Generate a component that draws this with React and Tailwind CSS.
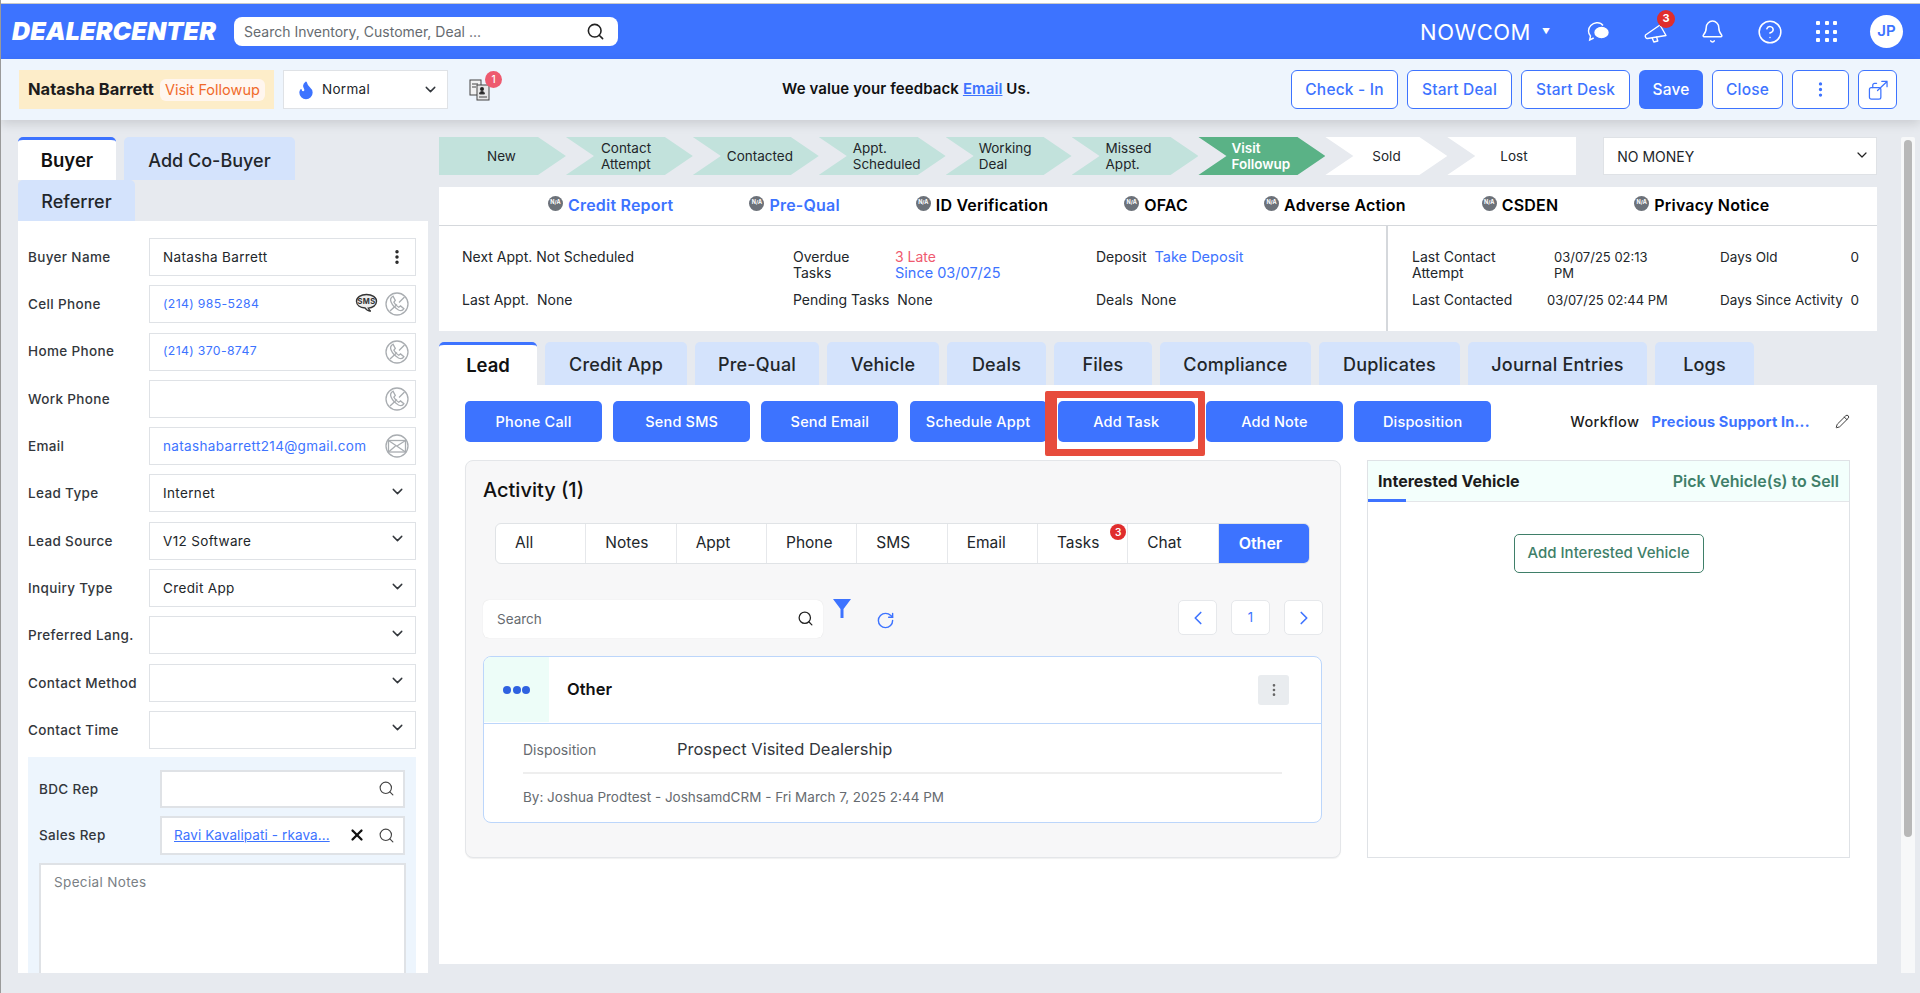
import React from 'react';
import { Search, ChevronDown, EllipsisVertical, Bell, CircleHelp, Flame, X, ChevronLeft, ChevronRight, RotateCw, Pencil } from 'lucide-react';

const steps = [
  { a: 'New', w: 'w-[127px]', pl: 'pl-[48px]', clip: '[clip-path:polygon(0_0,99px_0,100%_50%,99px_100%,0_100%)]', bg: 'bg-[#c2e2dc]' },
  { a: 'Contact', b: 'Attempt', w: 'w-[127px]', pl: 'pl-[35px]', clip: '[clip-path:polygon(0_0,99px_0,100%_50%,99px_100%,0_100%,28px_50%)]', bg: 'bg-[#c2e2dc]' },
  { a: 'Contacted', w: 'w-[126px]', pl: 'pl-[34px]', clip: '[clip-path:polygon(0_0,98px_0,100%_50%,98px_100%,0_100%,28px_50%)]', bg: 'bg-[#c2e2dc]' },
  { a: 'Appt.', b: 'Scheduled', w: 'w-[127px]', pl: 'pl-[34px]', clip: '[clip-path:polygon(0_0,99px_0,100%_50%,99px_100%,0_100%,28px_50%)]', bg: 'bg-[#c2e2dc]' },
  { a: 'Working', b: 'Deal', w: 'w-[126px]', pl: 'pl-[33px]', clip: '[clip-path:polygon(0_0,98px_0,100%_50%,98px_100%,0_100%,28px_50%)]', bg: 'bg-[#c2e2dc]' },
  { a: 'Missed', b: 'Appt.', w: 'w-[127px]', pl: 'pl-[34px]', clip: '[clip-path:polygon(0_0,99px_0,100%_50%,99px_100%,0_100%,28px_50%)]', bg: 'bg-[#c2e2dc]' },
  { a: 'Visit', b: 'Followup', w: 'w-[127px]', pl: 'pl-[33px]', clip: '[clip-path:polygon(0_0,99px_0,100%_50%,99px_100%,0_100%,28px_50%)]', bg: 'bg-[#5ab286] text-white font-semibold' },
  { a: 'Sold', w: 'w-[122px]', pl: 'pl-[47px]', clip: '[clip-path:polygon(0_0,94px_0,100%_50%,94px_100%,0_100%,28px_50%)]', bg: 'bg-white' },
  { a: 'Lost', w: 'w-[129px]', pl: 'pl-[53px]', clip: '[clip-path:polygon(0_0,100%_0,100%_100%,0_100%,28px_50%)]', bg: 'bg-white' },
];

const checks = [
  { label: 'Credit Report', cls: 'text-[#3d73ff]' },
  { label: 'Pre-Qual', cls: 'text-[#3d73ff]' },
  { label: 'ID Verification', cls: 'text-black' },
  { label: 'OFAC', cls: 'text-black' },
  { label: 'Adverse Action', cls: 'text-black' },
  { label: 'CSDEN', cls: 'text-black' },
  { label: 'Privacy Notice', cls: 'text-black' },
];

const tabs = [
  { label: 'Credit App', w: 'w-[142px]' },
  { label: 'Pre-Qual', w: 'w-[124px]' },
  { label: 'Vehicle', w: 'w-[112px]' },
  { label: 'Deals', w: 'w-[99px]' },
  { label: 'Files', w: 'w-[98px]' },
  { label: 'Compliance', w: 'w-[151px]' },
  { label: 'Duplicates', w: 'w-[141px]' },
  { label: 'Journal Entries', w: 'w-[179px]' },
  { label: 'Logs', w: 'w-[99px]' },
];

const filters = ['All', 'Notes', 'Appt', 'Phone', 'SMS', 'Email', 'Tasks', 'Chat'];

const PhoneCircle = () => (
  <svg width="24" height="24" viewBox="0 0 24 24" fill="none" stroke="#a9adb1" strokeWidth="1.3" className="shrink-0">
    <circle cx="12" cy="12" r="11" />
    <path d="M8 4.200c-2.300 1.300-3 3.300-1.900 5.900 1.400 3.400 4.200 6.200 7.400 7.900 2.400 1.200 4.300.6 5.400-1.300l-3.400-2.800-1.800 1.300c-1.900-1.100-3.800-3-4.800-5l1.400-1.700z" />
    <path d="M5 19l7-6.500M14 10.500L19.500 5" />
  </svg>
);

const MailCircle = () => (
  <svg width="24" height="24" viewBox="0 0 24 24" fill="none" stroke="#a9adb1" strokeWidth="1.3" className="shrink-0">
    <circle cx="12" cy="12" r="11" />
    <rect x="3.500" y="6.500" width="17" height="11.500" />
    <path d="M3.500 6.500l17 11.500M3.500 18l7-6M20.500 6.500L12 12" />
  </svg>
);

const SmsBubble = () => (
  <svg width="23" height="22" viewBox="0 0 23 22" className="shrink-0">
    <path d="M11.500 1.500c5.600 0 10 2.900 10 6.800s-4 6.600-8.200 6.800c.6 1.600 1.400 2.600 2.400 3.200-2.400-.2-4.400-1.400-5.600-3.300C5 14.700 1.500 12 1.500 8.300c0-3.900 4.400-6.800 10-6.800z" fill="#ededed" stroke="#333" strokeWidth="1.400" />
    <text x="11.500" y="11" textAnchor="middle" fontSize="7.500" fontWeight="700" fill="#333" fontFamily="Inter, sans-serif">SMS</text>
  </svg>
);

const NaDot = () => (
  <span className="flex h-[15px] w-[15px] shrink-0 -translate-y-[2px] items-center justify-center rounded-full bg-[#6c7179] text-[5.5px] font-bold leading-none text-white">N/A</span>
);

const Field = ({ label, children }) => (
  <div className="flex h-[38px] items-center">
    <div className="w-[121px] shrink-0 whitespace-nowrap text-[13.5px] font-medium tracking-[0.35px] text-[#33373c]">{label}</div>
    <div className="flex h-full w-[267px] items-center border border-[#dfe2e6] bg-white pl-[13px] pr-[6px] text-[13.5px] tracking-[0.35px] text-[#22262a]">{children}</div>
  </div>
);

const SelectField = ({ label, value }) => (
  <Field label={label}>
    <span className="flex-1">{value}</span>
    <ChevronDown size={17} strokeWidth={2} className="mr-[3px] -translate-y-[2px] text-[#33373c]" />
  </Field>
);

const ToolButton = ({ w, children }) => (
  <button className={`flex h-[39px] ${w} items-center justify-center rounded-[6px] border border-[#3d73ff] bg-white text-[15.5px] font-medium tracking-[0.2px] text-[#3d73ff]`}>{children}</button>
);

const ActionButton = ({ children }) => (
  <button className="flex h-[41px] w-[137px] items-center justify-center whitespace-nowrap rounded-[5px] bg-[#3d73ff] text-[14.5px] font-medium tracking-[0.2px] text-white">{children}</button>
);

const PageButton = ({ children }) => (
  <div className="flex h-[35px] w-[39px] items-center justify-center rounded-[5px] border border-[#e6e8eb] bg-white text-[13px] text-[#3d73ff]">{children}</div>
);

export default function App() {
  return (
    <div className="flex h-screen flex-col overflow-hidden border-l border-l-[#9a9a9a] bg-[#e7eaef] font-['Inter','Liberation_Sans',sans-serif] text-[#22262a]">
      <div className="h-[4px] shrink-0 border-b border-b-[#c9c9c9] bg-white"></div>

      {/* Top bar */}
      <header className="flex h-[55px] shrink-0 items-center bg-[#3d73ff] pr-[17px] text-white">
        <div className="ml-[11px] w-[222px] text-[25px] font-black italic leading-none tracking-[0.1px]">DEALERCENTER</div>
        <div className="flex h-[29px] w-[384px] items-center rounded-[8px] bg-white pl-[10px] pr-[13px]">
          <span className="flex-1 text-[14px] text-[#666b70]">Search Inventory, Customer, Deal ...</span>
          <Search size={19} strokeWidth={2} className="text-[#222]" />
        </div>
        <div className="ml-auto flex items-center">
          <span className="text-[22px] leading-none tracking-[0.5px]">NOWCOM</span>
          <span className="ml-[11px] -translate-y-[1px] text-[8px]">▼</span>
          <svg width="24" height="24" viewBox="0 0 24 24" fill="none" stroke="white" strokeWidth="1.400" className="ml-[36px]">
            <path d="M17 5.500C15.500 3.500 13 2.500 10.500 2.800 6 3.300 2.500 6.800 2.500 11c0 2 .8 3.700 2 5l-.8 4 4-2" />
            <ellipse cx="15.500" cy="12.500" rx="6.500" ry="5" fill="white" />
          </svg>
          <div className="relative ml-[34px]">
            <svg width="24" height="24" viewBox="0 0 24 24" fill="none" stroke="white" strokeWidth="1.400" strokeLinejoin="round">
              <path d="M1.500 15L16 5l6 10.500L3.500 18.500c-1.500 0-2.800-2-2-3.500z" />
              <path d="M8 17.500l1.800 4.500 4-1-1.400-4.500" />
            </svg>
            <span className="absolute -right-[7px] -top-[10px] flex h-[18px] w-[18px] items-center justify-center rounded-full bg-[#e02d2d] text-[11px] font-bold text-white">3</span>
          </div>
          <Bell size={25} strokeWidth={1.400} className="ml-[32px]" />
          <CircleHelp size={26} strokeWidth={1.400} className="ml-[32px]" />
          <div className="ml-[33px] grid h-[21px] w-[21px] grid-cols-3 gap-[4.500px]">
            {[1, 2, 3, 4, 5, 6, 7, 8, 9].map((n) => (
              <span key={n} className="rounded-[1px] bg-white"></span>
            ))}
          </div>
          <div className="ml-[33px] flex h-[33px] w-[33px] items-center justify-center rounded-full bg-white text-[15px] font-semibold text-[#3d73ff]">JP</div>
        </div>
      </header>

      {/* Lead toolbar */}
      <div className="relative z-10 flex h-[61px] shrink-0 items-center bg-[#eef5fd] pl-[18px] pr-[23px] shadow-[0_4px_10px_rgba(0,0,0,0.12)]">
        <div className="flex h-[39px] w-[255px] items-center bg-[#fdedc9] pl-[9px]">
          <span className="whitespace-nowrap text-[16.5px] font-bold text-[#1c1c1c]">Natasha Barrett</span>
          <span className="ml-[6px] flex h-[22px] w-[105px] items-center justify-center whitespace-nowrap rounded-[6px] bg-[#fff6ef] text-[14.5px] text-[#f06a2a]">Visit Followup</span>
        </div>
        <div className="ml-[9px] flex h-[39px] w-[165px] items-center border border-[#dfe2e6] bg-white pl-[12px] pr-[8px]">
          <Flame size={20} fill="#3d73ff" className="text-[#3d73ff]" />
          <span className="ml-[6px] flex-1 text-[13.5px] tracking-[0.3px]">Normal</span>
          <ChevronDown size={17} strokeWidth={2} className="text-[#33373c]" />
        </div>
        <div className="relative ml-[21px]">
          <svg width="21" height="22" viewBox="0 0 21 22" fill="none" stroke="#444" strokeWidth="1">
            <rect x="1" y="1" width="11" height="15" fill="#f2f2f2" />
            <rect x="8" y="6" width="12" height="15" fill="#e8e8e8" />
            <circle cx="13" cy="10" r="1.700" fill="#222" />
            <path d="M10.500 15c.3-2 1-2.500 2.500-2.500s2.200.5 2.500 2.500z" fill="#222" />
            <path d="M10 18h8M3 5h6M3 8h4" />
          </svg>
          <span className="absolute -right-[12px] -top-[8px] flex h-[17px] w-[17px] items-center justify-center rounded-full bg-[#ee5a6f] text-[10px] font-medium text-white">1</span>
        </div>
        <div className="ml-[292px] whitespace-nowrap text-[15px] font-semibold tracking-[0.1px] text-[#111]">
          We value your feedback <span className="text-[#3d73ff] underline">Email</span> Us.
        </div>
        <div className="ml-auto flex gap-[9px]">
          <ToolButton w="w-[107px]">Check - In</ToolButton>
          <ToolButton w="w-[105px]">Start Deal</ToolButton>
          <ToolButton w="w-[109px]">Start Desk</ToolButton>
          <button className="flex h-[39px] w-[64px] items-center justify-center rounded-[6px] bg-[#3d73ff] text-[15.5px] font-medium tracking-[0.2px] text-white">Save</button>
          <ToolButton w="w-[71px]">Close</ToolButton>
          <ToolButton w="w-[57px]"><EllipsisVertical size={19} strokeWidth={2.200} /></ToolButton>
          <ToolButton w="w-[39px]">
            <svg width="20" height="20" viewBox="0 0 21 21" fill="none" stroke="currentColor" strokeWidth="1.300" strokeLinecap="round" strokeLinejoin="round">
              <path d="M9 3.500H7a2 2 0 0 0-2 2V8" />
              <rect x="1.500" y="8" width="12" height="12" rx="2" />
              <path d="M10 11l10-9.500M14.500 1.500H20V7" />
            </svg>
          </ToolButton>
        </div>
      </div>

      <main className="flex min-h-0 flex-1 pb-[20px] pl-[17px] pt-[17px]">
        {/* Left column */}
        <aside className="flex w-[410px] shrink-0 flex-col">
          <div className="flex h-[43px] gap-[8px]">
            <div className="flex w-[98px] items-center justify-center rounded-t-[5px] border-t-[3px] border-t-[#3d73ff] bg-white pt-[1px] text-[18.5px] font-semibold text-[#111]">Buyer</div>
            <div className="flex w-[171px] items-center justify-center rounded-t-[5px] bg-[#d4e3fc] pt-[3px] text-[18px] font-medium text-[#22262a]">Add Co-Buyer</div>
          </div>
          <div className="flex h-[41px] w-[117px] items-center justify-center rounded-t-[5px] bg-[#d4e3fc] pt-[2px] text-[18px] font-medium text-[#22262a]">Referrer</div>
          <div className="min-h-0 flex-1 overflow-hidden bg-white px-[10px] pt-[17px]">
            <div className="flex flex-col gap-[9.300px]">
              <Field label="Buyer Name">
                <span className="flex-1">Natasha Barrett</span>
                <EllipsisVertical size={18} strokeWidth={2.600} className="mr-[3px] text-[#222]" />
              </Field>
              <Field label="Cell Phone">
                <span className="flex-1 text-[12.25px] text-[#3d73ff]">(214) 985-5284</span>
                <SmsBubble />
                <span className="ml-[7px]"><PhoneCircle /></span>
              </Field>
              <Field label="Home Phone">
                <span className="flex-1 text-[12.25px] text-[#3d73ff]">(214) 370-8747</span>
                <PhoneCircle />
              </Field>
              <Field label="Work Phone">
                <span className="flex-1"></span>
                <PhoneCircle />
              </Field>
              <Field label="Email">
                <span className="flex-1 text-[#3d73ff]">natashabarrett214@gmail.com</span>
                <MailCircle />
              </Field>
              <SelectField label="Lead Type" value="Internet" />
              <SelectField label="Lead Source" value="V12 Software" />
              <SelectField label="Inquiry Type" value="Credit App" />
              <SelectField label="Preferred Lang." value="" />
              <SelectField label="Contact Method" value="" />
              <SelectField label="Contact Time" value="" />
            </div>
            <div className="mt-[8px] w-[388px] bg-[#edf5fd] px-[11px] pb-[20px] pt-[13px]">
              <div className="flex h-[38px] items-center">
                <div className="w-[121px] shrink-0 text-[13.5px] font-medium tracking-[0.35px] text-[#33373c]">BDC Rep</div>
                <div className="flex h-full w-[246px] items-center justify-end border-2 border-[#dfe2e6] bg-white pr-[8px]">
                  <Search size={17} strokeWidth={1.600} className="text-[#444]" />
                </div>
              </div>
              <div className="mt-[8px] flex h-[39px] items-center">
                <div className="w-[121px] shrink-0 text-[13.5px] font-medium tracking-[0.35px] text-[#33373c]">Sales Rep</div>
                <div className="flex h-full w-[246px] items-center border-2 border-[#dfe2e6] bg-white pl-[12px] pr-[8px]">
                  <span className="flex-1 whitespace-nowrap text-[13.5px] tracking-[0.1px] text-[#3d73ff] underline">Ravi Kavalipati - rkava...</span>
                  <X size={18} strokeWidth={3} className="mr-[12px] text-[#111]" />
                  <Search size={17} strokeWidth={1.600} className="text-[#444]" />
                </div>
              </div>
              <div className="mt-[8px] h-[150px] w-[367px] border-2 border-[#dfe2e6] bg-white px-[13px] pt-[7px] text-[13.5px] tracking-[0.35px] text-[#7a7f85]">Special Notes</div>
            </div>
          </div>
        </aside>

        {/* Main column */}
        <section className="ml-[11px] flex w-[1438px] shrink-0 flex-col pb-[9px]">
          <div className="flex h-[38px]">
            {steps.map((s) => (
              <div key={s.a} className={`flex h-full flex-col justify-center text-[13.5px] leading-[16px] ${s.w} ${s.pl} ${s.clip} ${s.bg}`}>
                <span>{s.a}</span>
                {s.b && <span>{s.b}</span>}
              </div>
            ))}
            <div className="ml-[27px] flex w-[274px] items-center border border-[#dfe2e6] bg-white pl-[13px] pr-[6px] pt-[1px] text-[14px]">
              <span className="flex-1">NO MONEY</span>
              <ChevronDown size={16} strokeWidth={1.800} className="-translate-y-[2px] text-[#222]" />
            </div>
          </div>

          <div className="mt-[12px] flex h-[39px] shrink-0 items-center gap-[76px] border-b border-b-[#d5d8dc] bg-white pb-[2px] pl-[109px]">
            {checks.map((c) => (
              <div key={c.label} className="flex items-center gap-[5px]">
                <NaDot />
                <span className={`whitespace-nowrap text-[16px] font-semibold tracking-[0.2px] ${c.cls}`}>{c.label}</span>
              </div>
            ))}
          </div>

          <div className="flex h-[105px] shrink-0 bg-white text-[14px] leading-[16px]">
            <div className="grid w-[949px] grid-cols-[331px_303px_1fr] grid-rows-[43px_43px] border-r-2 border-r-[#d5d8dc] pl-[23px] pt-[23px]">
              <div>Next Appt. Not Scheduled</div>
              <div className="flex">
                <span className="w-[102px]">Overdue<br />Tasks</span>
                <span><span className="text-[#ef5a6f]">3 Late</span><br /><span className="text-[14.5px] text-[#3d73ff]">Since 03/07/25</span></span>
              </div>
              <div>Deposit <span className="ml-[4px] text-[14.5px] text-[#3d73ff]">Take Deposit</span></div>
              <div>Last Appt.&nbsp; None</div>
              <div>Pending Tasks&nbsp; None</div>
              <div>Deals&nbsp; None</div>
            </div>
            <div className="grid flex-1 grid-cols-[142px_166px_139px] grid-rows-[43px_43px] pl-[24px] pt-[23px]">
              <div>Last Contact<br />Attempt</div>
              <div className="text-[13px]">03/07/25 02:13<br />PM</div>
              <div className="flex justify-between text-[13.5px]"><span>Days Old</span><span>0</span></div>
              <div>Last Contacted</div>
              <div className="-ml-[7px] text-[13px]">03/07/25 02:44 PM</div>
              <div className="flex justify-between whitespace-nowrap text-[13.5px]"><span>Days Since Activity</span><span>0</span></div>
            </div>
          </div>

          <div className="mt-[11px] flex h-[43px] shrink-0">
            <div className="flex w-[98px] items-center justify-center rounded-t-[5px] border-t-[3px] border-t-[#3d73ff] bg-white pt-[1px] text-[18.5px] font-semibold text-[#111]">Lead</div>
            <div className="ml-[8px] flex gap-[8px]">
              {tabs.map((t) => (
                <div key={t.label} className={`flex items-center justify-center whitespace-nowrap rounded-t-[5px] bg-[#d4e3fc] pt-[2px] text-[18px] font-medium tracking-[0.2px] text-[#22262a] ${t.w}`}>{t.label}</div>
              ))}
            </div>
          </div>

          <div className="min-h-0 flex-1 bg-white pl-[26px] pr-[27px] pt-[16px]">
            <div className="relative flex items-center gap-[11.2px]">
              <ActionButton>Phone Call</ActionButton>
              <ActionButton>Send SMS</ActionButton>
              <ActionButton>Send Email</ActionButton>
              <ActionButton>Schedule Appt</ActionButton>
              <ActionButton>Add Task</ActionButton>
              <ActionButton>Add Note</ActionButton>
              <ActionButton>Disposition</ActionButton>
              <span className="ml-[68px] text-[14.5px] font-medium tracking-[0.35px] text-[#1c1c1c]">Workflow</span>
              <span className="ml-[1px] whitespace-nowrap text-[14.5px] font-bold tracking-[0.2px] text-[#3d73ff]">Precious Support In...</span>
              <Pencil size={15} strokeWidth={1.400} className="ml-[14px] text-[#222]" />
              {/* red highlight around Add Task */}
              <div className="absolute -top-[10px] left-[580px] h-[65px] w-[160px] rounded-[2px] border-[7px] border-l-[12px] border-[#e74c3c]"></div>
            </div>

            <div className="mt-[18px] flex items-start gap-[26px]">
              <div className="h-[398px] w-[876px] rounded-[8px] border border-[#e4e6e9] bg-[#f7f7f8] px-[17px] pt-[15px] shadow-[0_1px_1px_rgba(0,0,0,0.06)]">
                <div className="text-[20px] font-medium leading-[28px] text-[#111]">Activity (1)</div>
                <div className="ml-[12px] mt-[19px] flex h-[41px] w-[815px] overflow-hidden rounded-[6px] border border-[#e0e3e6] bg-white">
                  {filters.map((f) => (
                    <div key={f} className="relative flex flex-1 items-center border-r border-r-[#e6e8eb] pb-[2px] pl-[19px] text-[15.5px] text-[#22262a]">
                      {f}
                      {f === 'Tasks' && <span className="absolute right-[1px] top-[0px] flex h-[16px] w-[16px] items-center justify-center rounded-full bg-[#e02d2d] text-[10px] font-semibold text-white">3</span>}
                    </div>
                  ))}
                  <div className="flex flex-1 items-center bg-[#3d73ff] pb-[2px] pl-[20px] text-[16px] font-semibold text-white">Other</div>
                </div>
                <div className="mt-[36px] flex h-[38px] items-start">
                  <div className="flex h-[38px] w-[340px] items-center rounded-[6px] bg-white pl-[14px] pr-[9px] shadow-[0_0_1px_rgba(0,0,0,0.15)]">
                    <span className="flex-1 text-[13.5px] text-[#666b70]">Search</span>
                    <Search size={17} strokeWidth={1.800} className="-translate-y-[1px] text-[#222]" />
                  </div>
                  <svg width="18" height="20" viewBox="0 0 18 20" className="ml-[10px] -translate-y-[1px]">
                    <path d="M0 0h18L10.500 10v9h-3v-9z" fill="#3d73ff" />
                  </svg>
                  <RotateCw size={19} strokeWidth={1.800} className="ml-[25px] mt-[11px] text-[#3d73ff]" />
                  <div className="ml-auto flex gap-[14px]">
                    <PageButton><ChevronLeft size={22} strokeWidth={1.800} /></PageButton>
                    <PageButton>1</PageButton>
                    <PageButton><ChevronRight size={22} strokeWidth={1.800} /></PageButton>
                  </div>
                </div>
                <div className="mt-[18px] h-[167px] w-[839px] overflow-hidden rounded-[8px] border border-[#bcd6fb] bg-white">
                  <div className="flex h-[67px] items-center border-b border-b-[#bcd6fb] pb-[1px] pr-[32px]">
                    <div className="flex h-full w-[65px] items-center justify-center gap-[1.500px] bg-[#edfdf8]">
                      <span className="h-[8px] w-[8px] rounded-full bg-[#2f62e0]"></span>
                      <span className="h-[8px] w-[8px] rounded-full bg-[#2f62e0]"></span>
                      <span className="h-[8px] w-[8px] rounded-full bg-[#2f62e0]"></span>
                    </div>
                    <span className="ml-[18px] flex-1 text-[16.5px] font-semibold text-[#111]">Other</span>
                    <div className="flex h-[30px] w-[31px] items-center justify-center rounded-[3px] bg-[#e9ecef]">
                      <EllipsisVertical size={16} strokeWidth={2} className="text-[#666]" />
                    </div>
                  </div>
                  <div className="px-[39px]">
                    <div className="flex h-[50px] items-center border-b-2 border-b-[#eeeeee] pt-[3px]">
                      <span className="w-[154px] text-[14px] text-[#666b70]">Disposition</span>
                      <span className="whitespace-nowrap text-[16.5px] text-[#33373c]">Prospect Visited Dealership</span>
                    </div>
                    <div className="mt-[13px] whitespace-nowrap text-[13.5px] leading-[20px] text-[#666b70]">By: Joshua Prodtest - JoshsamdCRM - Fri March 7, 2025 2:44 PM</div>
                  </div>
                </div>
              </div>

              <div className="h-[398px] w-[483px] border border-[#dfe2e6] bg-white">
                <div className="relative flex h-[41px] items-center justify-between border-b border-b-[#e4e6e9] bg-[#f3fffc] px-[10px]">
                  <span className="whitespace-nowrap text-[16px] font-bold text-[#1c1c1c]">Interested Vehicle</span>
                  <span className="whitespace-nowrap text-[16px] font-semibold text-[#3f7f69]">Pick Vehicle(s) to Sell</span>
                  <div className="absolute -bottom-[1px] left-0 h-[3px] w-[38px] bg-[#3d73ff]"></div>
                </div>
                <div className="mt-[32px] flex justify-center">
                  <button className="flex h-[39px] w-[190px] items-center justify-center whitespace-nowrap rounded-[5px] border border-[#3f7f69] text-[15px] font-medium text-[#3f7f69]">Add Interested Vehicle</button>
                </div>
              </div>
            </div>
          </div>
        </section>

        {/* Page scrollbar */}
        <div className="ml-[24px] w-[14px] shrink-0 rounded-t-[2px] bg-[#f7f8f9] px-[3px]">
          <div className="mt-[3px] h-[697px] rounded-full bg-[#b8b8b8]"></div>
        </div>
      </main>
    </div>
  );
}
